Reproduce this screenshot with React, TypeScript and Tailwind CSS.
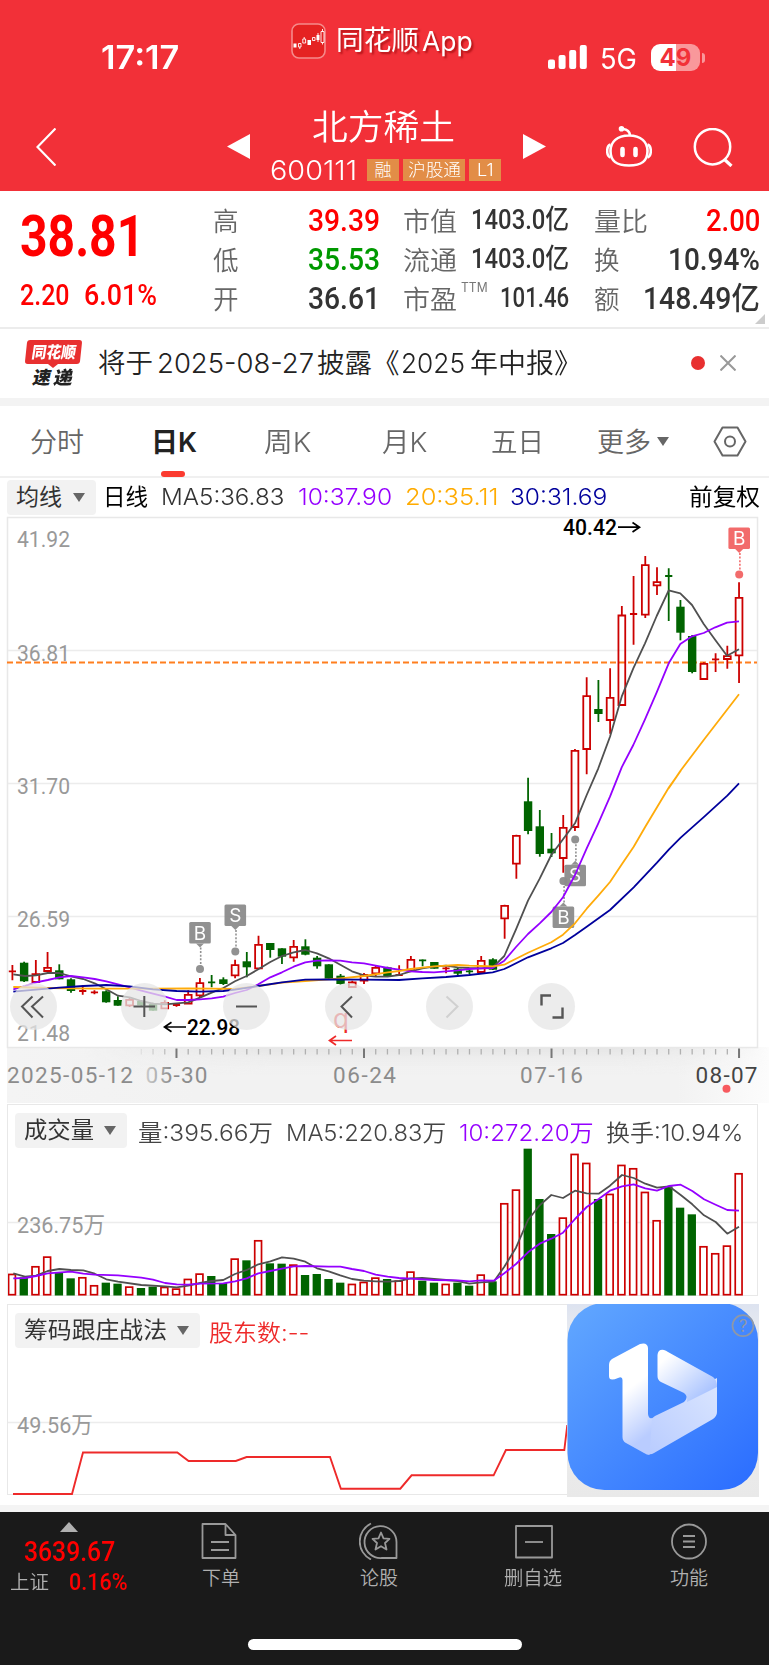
import { useLayoutEffect, useRef, type ReactNode } from "react";

const UI = "font-[Inter,'Noto_Sans_CJK_SC',sans-serif]";
const DIN = "font-[Roboto,'Noto_Sans_CJK_SC',sans-serif]";

/** A single line of text that is condensed or stretched to a known column width. */
function Fit({ w, className = "", children }: { w: number; className?: string; children: ReactNode }) {
  const inner = useRef<HTMLSpanElement>(null);
  useLayoutEffect(() => {
    const el = inner.current;
    if (el) el.style.transform = `scaleX(${w / el.offsetWidth})`;
  }, [w, children]);
  return (
    <span className={`block shrink-0 text-left whitespace-nowrap ${className}`} style={{ width: w }}>
      <span ref={inner} className="inline-block origin-left">{children}</span>
    </span>
  );
}

type Candle = [kind: "r" | "g", high: number, top: number, bottom: number, low: number, volumeTop: number];

const CANDLES: Candle[] = [
  ["r", 965, 971.3, 971.3, 980.3, 521], ["g", 961.7, 962.7, 981.3, 982, 532], ["r", 960, 973.7, 982.3, 983, 498],
  ["r", 952, 967.3, 971.3, 972, 469], ["g", 964.3, 970.3, 979.3, 979.3, 517], ["g", 978.3, 979.3, 991, 992.7, 535],
  ["r", 985, 991, 991, 994.7, 531], ["r", 990.3, 992.3, 992.3, 994.3, 555], ["g", 990.3, 991.3, 1002.3, 1002.7, 548],
  ["g", 996.3, 1000, 1005.7, 1005.7, 551], ["r", 997.7, 999.3, 1005.7, 1007, 559], ["g", 1000, 1001, 1005.3, 1006, 564],
  ["g", 1002.7, 1004, 1010.7, 1010.7, 560], ["r", 1000.3, 1002.3, 1008.7, 1009, 560], ["r", 1003.3, 1005, 1005, 1006.7, 565],
  ["r", 990.3, 994.3, 1004, 1004.3, 536], ["r", 978, 982.7, 995.7, 997.7, 520], ["g", 975, 982.3, 982.3, 987.3, 528],
  ["g", 977.3, 979.3, 984, 985, 549], ["r", 959.7, 964.7, 975.7, 978.3, 475], ["g", 952, 961.3, 967.3, 977.3, 481],
  ["r", 935.7, 944.3, 968.7, 969, 420], ["g", 943, 943, 950, 957.7, 490], ["g", 948.3, 948.3, 956.7, 964, 491],
  ["r", 940, 946.3, 957.7, 961.7, 493], ["g", 939.3, 946.3, 954.7, 955.3, 525], ["g", 956, 957.7, 966.3, 968.7, 522],
  ["g", 964.3, 964.3, 978.7, 978.7, 537], ["g", 974, 975.7, 984, 984.7, 548], ["r", 980.7, 982, 987.3, 988, 551],
  ["r", 973, 974.3, 981, 984, 545], ["r", 966, 967.3, 973.7, 976, 532], ["g", 966.7, 967.3, 976.7, 976.7, 537],
  ["r", 965.3, 975, 975, 976, 541], ["r", 956, 959.3, 970.7, 972, 514], ["g", 959.3, 960.3, 960.3, 966.3, 542],
  ["g", 962, 962, 968.7, 968.7, 548], ["r", 966.7, 968.3, 968.3, 973.3, 551], ["g", 967.3, 968.7, 973.7, 975.3, 548],
  ["g", 969.3, 971.3, 971.3, 974, 557], ["r", 956, 960.3, 972.3, 972.7, 523], ["g", 958.3, 959.3, 969.7, 970, 544],
  ["r", 904.7, 905.3, 918.7, 938.7, 309], ["r", 834.7, 835.3, 864, 878.7, 268], ["g", 777.7, 801.3, 831, 834.3, 146],
  ["g", 810, 826.3, 854, 856.7, 297], ["g", 833, 848.7, 853.3, 857, 402], ["r", 815, 827.3, 858.3, 872.7, 352],
  ["r", 749, 750.3, 827.3, 831, 161], ["r", 677.3, 695.7, 749.3, 774.3, 188], ["g", 680, 709, 714, 722, 297],
  ["r", 668.3, 697.3, 720.3, 733.7, 281], ["r", 606, 615, 705.3, 705.3, 194], ["r", 576, 614, 614, 644.7, 204],
  ["r", 556, 564.7, 615, 618, 275], ["r", 567.3, 581.7, 585.7, 595, 360], ["g", 568.3, 576, 576, 621, 259],
  ["g", 600, 606.7, 632.7, 640.3, 323], ["g", 635, 636, 672, 673.3, 343], ["r", 662.3, 663.3, 679.3, 679.3, 438],
  ["r", 653.3, 659.3, 659.3, 672, 459], ["r", 645.7, 655.7, 659.3, 668.7, 436], ["r", 582.3, 597.3, 655.7, 683, 219],
];

const RED = "#cc0000";
const GREEN = "#006400";
const cx = (i: number) => 12.4 + i * 11.72;

type Segment = [ox: number, oy: number, points: string];

/** Joins segments, stored in thirds of a pixel from their own origin, into one point list. */
const track = (...segments: Segment[]) =>
  segments
    .map(([ox, oy, pts]) =>
      pts.split(" ").map((p) => {
        const [x, y] = p.split(",").map(Number);
        return `${(ox + x / 3).toFixed(1)},${(oy + y / 3).toFixed(1)}`;
      }).join(" "))
    .join(" ");

const MA5 = track(
  [0, 900, "40,223 75,228 108,226 143,219 178,219 213,229 250,237 284,250 319,268 354,287 389,292 424,303 459,311 495,313 530,310 565,307 600,293 635,278 670,264 705,244 740,228 775,208 811,186 846,168 881,157 916,150 951,160 986,175 1021,194 1056,214 1092,226 1127,230"],
  [380, 760, "23,650 57,645 92,634 127,625 162,620 198,617 233,622 268,624 303,625 338,622 373,588 408,508 444,422 479,356 514,285 549,238 585,190 620,105"],
  [480, 510, "355,775 390,680 425,560 460,475 495,400 530,318 566,241 601,250 636,285 671,342 706,390 741,437 777,418"],
);
const MA10 = track(
  [0, 900, "40,268 75,258 108,247 143,240 178,232 213,228 250,232 284,237 319,244 354,253 389,262 424,272 459,281 495,290 530,300 565,300 600,298 635,295 670,290 705,279 740,270 775,253 811,232 846,217 881,200 916,187 951,182 986,181 1021,182 1056,187 1092,190 1127,197"],
  [380, 760, "23,624 57,629 92,634 127,636 162,637 198,634 233,631 268,627 303,625 338,624 373,602 408,561 444,522 479,490 514,456 549,412 585,345 620,265 655,190 690,110"],
  [480, 510, "425,772 460,705 495,628 530,547 566,460 601,402 636,379 671,369 706,352 741,338 777,334"],
);
const MA20 = track(
  [0, 900, "40,261 143,264 213,265 284,266 354,266 459,266 565,265 635,266 705,267 775,258 846,248 916,243 986,238 1021,235 1092,228"],
  [380, 760, "23,637 57,633 92,627 127,623 162,619 198,617 233,615 268,617 303,618 338,619 373,614 408,596 444,578 514,547 549,524 585,490 620,446 655,407 690,366 726,312 761,260 796,200 831,142 867,82 902,32"],
  [480, 510, "566,835 601,783 671,690 777,553"],
);
const MA30 = track(
  [0, 900, "40,275 108,269 178,263 250,258 319,255 389,259 459,268 530,273 600,275 670,273 705,269 775,258 846,247 916,239 986,238 1092,239"],
  [380, 760, "57,660 127,655 198,651 268,645 338,637 373,627 444,592 514,565 549,549 585,525 620,500 690,450 761,382 831,308 867,268 902,233 973,170 1042,107 1077,70"],
);
const VOL5 = track(
  [0, 1100, "40,520 75,530 108,527 143,513 178,507 213,510 250,511 284,521 319,538 354,545 424,555 495,559 530,562 565,557 600,549 635,543 670,540 705,522 740,510 775,493 811,484 846,472 881,476 916,485 951,505 986,514 1021,526 1056,537 1092,542 1127,544"],
  [380, 1100, "23,545 57,543 92,535 127,534 162,537 198,540 233,543 268,551 303,547 341,545 373,500 408,443 444,360 479,316 514,285 549,294 585,272 620,280 656,281 690,257 726,225 761,234 796,251 831,263 867,259 902,285 937,313 972,346 1007,366 1042,401 1077,380"],
);
const VOL10 = track(
  [0, 1100, "40,535 75,534 108,528 143,520 213,515 250,521 284,524 354,526 424,533 459,539 495,549 530,553 565,554 600,551 670,550 705,544 740,535 775,520 811,513 846,506 881,499 916,498 986,500 1021,500 1056,507 1092,513 1127,524"],
  [380, 1100, "23,530 57,534 92,536 162,540 233,541 268,544 303,541 341,542 373,520 408,492 444,457 479,431 514,416 549,398 585,357 620,321 656,297 690,272 726,259 761,253 796,265 831,272 867,258 902,254 937,273 972,298 1007,314 1042,330 1077,332"],
);

function Line({ points, color }: { points: string; color: string }) {
  return <polyline points={points} fill="none" stroke={color} strokeWidth="1.8" strokeLinejoin="round" />;
}

/** Chart label placed by its left edge, vertical middle and width. */
function Label({ x, y, w, size = 22.5, fill = "#999", weight = 400, spaced = false, children }: {
  x: number; y: number; w: number; size?: number; fill?: string; weight?: number; spaced?: boolean; children: string;
}) {
  return (
    <text x={x} y={y - 0.8 + size * 0.357} fontSize={size} fill={fill} fontWeight={weight} textLength={w}
      lengthAdjust={spaced ? "spacing" : "spacingAndGlyphs"} className={DIN}>
      {children}
    </text>
  );
}

function Marker({ x, top, dot, color, letter }: { x: number; top: number; dot: number; color: string; letter: string }) {
  const above = dot > top;
  const edge = above ? top + 21.5 : top;
  const tip = above ? edge + 4 : edge - 4;
  return (
    <g fill={color} opacity="0.95">
      <rect x={x - 10.8} y={top} width="21.6" height="21.6" rx="1.5" />
      <path d={`M${x - 4} ${edge}L${x} ${tip}L${x + 4} ${edge}Z`} />
      <line x1={x + 0.7} x2={x + 0.7} y1={tip} y2={dot} stroke={color} strokeWidth="1.6" strokeDasharray="2 1.6" />
      <circle cx={x} cy={dot} r="4" />
      <text x={x} y={top + 17.6} fontSize="19" fill="#fff" textAnchor="middle" className={UI}>{letter}</text>
    </g>
  );
}

function Caret({ className }: { className: string }) {
  return <svg viewBox="0 0 12 9" className={className}><path d="M0 0H12L6 9Z" fill="#666" /></svg>;
}

function StatusBar() {
  return (
    <div className="flex h-20 items-start text-white">
      <Fit w={78} className="ml-[101px] mt-[40px] h-[34px] text-[33px] leading-[34px] font-semibold">17:17</Fit>
      <svg viewBox="0 0 35 36" className="ml-[112px] mt-[23px] h-9 w-[35px]">
        <rect x="1" y="1" width="33" height="34" rx="7" fill="#e52222" stroke="#f58a8a" strokeWidth="1.6" />
        <path d="M2.500 20.500h3v4h-3zM16.500 17h3.500v5h-3.500zM25.500 12h3v5h-3z" fill="#fff" />
        <path d="M7.500 20.500h2.500v3.500h-2.500zM8.800 24v2M11.800 16h2.800v4h-2.800zM13.200 14v2M21.500 14.500h2.500v3h-2.500zM27 10v9M30 8.500h3v11h-3zM31.500 6v2.500M31.500 19.500v2" fill="none" stroke="#fff" strokeWidth=".9" />
      </svg>
      <Fit w={83} className="ml-[10px] mt-[25px] h-8 text-[27px] leading-8 font-normal [text-shadow:2px_2px_2px_#8009]">同花顺</Fit>
      <Fit w={51} className="ml-[3px] mt-[26px] h-8 text-[27px] leading-8 font-normal [text-shadow:2px_2px_2px_#8009]">App</Fit>
      <svg viewBox="0 0 39 24" className="ml-[75px] mt-[45px] h-6 w-[39px]" fill="#fff">
        <rect x="0" y="14.500" width="7" height="9.500" rx="2" /><rect x="10.600" y="10" width="7" height="14" rx="2" />
        <rect x="21.200" y="5" width="7" height="19" rx="2" /><rect x="31.800" y="0" width="7" height="24" rx="2" />
      </svg>
      <Fit w={37} className="ml-[13px] mt-[42px] h-[34px] text-[28px] leading-[34px]">5G</Fit>
      <div className="ml-[14px] mt-[44px] flex h-[27px] w-[49px] items-center justify-center rounded-[9px] bg-[linear-gradient(90deg,#fff_50%,#f9989b_50%)] text-[24px] leading-[27px] font-bold text-[#f23038]">49</div>
      <div className="ml-0.5 mt-[53px] h-2.5 w-[3px] rounded-r-full bg-[#f9989b]" />
    </div>
  );
}

function Tag({ className, w, children }: { className: string; w: number; children: string }) {
  return (
    <span className={`flex h-[22px] items-center justify-center bg-[#e28d47] ${className}`}>
      <Fit w={w} className="text-[17px] leading-[22px] font-light">{children}</Fit>
    </span>
  );
}

function TitleBar() {
  return (
    <div className="flex h-[111px] items-start text-white">
      <svg viewBox="0 0 20 38" className="ml-9 mt-12 h-[38px] w-5" fill="none" stroke="#fff" strokeWidth="2.200"><path d="M19.500 .5L1.500 19L19.500 37.500" /></svg>
      <svg viewBox="0 0 23 25" className="ml-[171px] mt-[54px] h-[25px] w-[23px]"><path d="M23 0V25L0 12.500Z" fill="#fff" /></svg>
      <div className="ml-[21px] mt-7 w-[230px]">
        <Fit w={143} className="ml-[41px] h-[38px] text-[35px] leading-[38px] font-[350]">北方稀土</Fit>
        <div className="mt-[13px] flex h-[22px] items-center">
          <Fit w={87} className="-ml-px text-[27.500px] leading-6 font-[350]">600111</Fit>
          <Tag className="ml-[10px] w-8" w={17}>融</Tag>
          <Tag className="ml-[4px] w-[62px]" w={53}>沪股通</Tag>
          <Tag className="ml-[4px] w-8" w={17}>L1</Tag>
        </div>
      </div>
      <svg viewBox="0 0 23 25" className="ml-[22px] mt-[54px] h-[25px] w-[23px]"><path d="M0 0V25L23 12.500Z" fill="#fff" /></svg>
      <svg viewBox="0 0 46 42" className="ml-[60px] mt-[46px] h-[42px] w-[46px]" fill="none" stroke="#fff" strokeWidth="2.600">
        <path d="M23 9.500C11 9.500 4.500 16 4.500 25C4.500 35 10 39.500 23 39.500C36 39.500 41.500 35 41.500 25C41.500 16 35 9.500 23 9.500ZM24 9C23.500 5 21 3.500 17 3" />
        <path d="M4.500 18.500C1.500 19.500 1.200 21.500 1.200 25S1.500 30.500 4.500 31.500M41.500 18.500C44.500 19.500 44.800 21.500 44.800 25S44.500 30.500 41.500 31.500" />
        <path d="M16.500 23v6M29.500 23v6" strokeWidth="4.600" strokeLinecap="round" /><circle cx="15.500" cy="2.800" r="1.500" fill="#fff" />
      </svg>
      <svg viewBox="0 0 40 39" className="ml-[41px] mt-[48px] h-[39px] w-10" fill="none" stroke="#fff" strokeWidth="2.500"><circle cx="19.500" cy="18.700" r="17.700" /><path d="M31.500 31.500L38.500 38" strokeWidth="3.200" /></svg>
    </div>
  );
}

function QuoteRow({ label, w, children }: { label: string; w: number; children: ReactNode }) {
  return (
    <div className="flex h-[39px] items-center justify-between">
      <Fit w={w} className="mt-0.5 text-[26.500px] leading-[39px] font-[350] text-[#666]">{label}</Fit>
      {children}
    </div>
  );
}

function Quote() {
  const num = `${DIN} leading-[39px] font-medium`;
  return (
    <section className="flex h-[138px] border-b-2 border-[#ececec] pt-[10px]">
      <div className="ml-[20px] w-[193px] text-[#ff0000]">
        <Fit w={124} className={`${DIN} mt-2 h-[56px] text-[57px] leading-[56px] font-bold`}>38.81</Fit>
        <div className={`${DIN} mt-[15px] flex h-[30px] text-[29px] leading-[30px] font-medium`}>
          <Fit w={50}>2.20</Fit>
          <Fit w={73} className="ml-[14px]">6.01%</Fit>
        </div>
      </div>
      <div className="w-[167px]">
        <QuoteRow label="高" w={26}><Fit w={72} className={`${num} text-[31px] text-[#ff0000]`}>39.39</Fit></QuoteRow>
        <QuoteRow label="低" w={26}><Fit w={72} className={`${num} text-[31px] text-[#009900]`}>35.53</Fit></QuoteRow>
        <QuoteRow label="开" w={26}><Fit w={72} className={`${num} text-[31px] text-[#333]`}>36.61</Fit></QuoteRow>
      </div>
      <div className="ml-[23px] w-[166px] text-[#333]">
        <QuoteRow label="市值" w={54}><Fit w={98} className={`${num} text-[27px]`}>1403.0亿</Fit></QuoteRow>
        <QuoteRow label="流通" w={54}><Fit w={98} className={`${num} text-[27px]`}>1403.0亿</Fit></QuoteRow>
        <QuoteRow label="市盈" w={54}>
          <Fit w={27} className="mb-[22px] -mr-0.5 -ml-2.5 text-[13px] leading-none text-[#777]">TTM</Fit>
          <Fit w={69} className={`${num} text-[27px]`}>101.46</Fit>
        </QuoteRow>
      </div>
      <div className="ml-[25px] w-[166px] text-[#333]">
        <QuoteRow label="量比" w={54}><Fit w={54} className={`${num} text-[31px] text-[#ff0000]`}>2.00</Fit></QuoteRow>
        <QuoteRow label="换" w={26}><Fit w={92} className={`${num} text-[31px]`}>10.94%</Fit></QuoteRow>
        <QuoteRow label="额" w={26}><Fit w={117} className={`${num} text-[31px]`}>148.49亿</Fit></QuoteRow>
      </div>
      <svg viewBox="0 0 10 10" className="-ml-[5px] mt-[113px] size-2.5"><path d="M10 0V10H0Z" fill="#ccc" /></svg>
    </section>
  );
}

function News() {
  return (
    <section className="flex h-[69px] items-center pb-px text-[27.500px] leading-[34px] text-[#222]">
      <div className="ml-[24px] flex w-[58px] flex-col items-center pt-0.5">
        <div className="flex h-6 w-[55px] -skew-x-6 items-center justify-center rounded-[3px] bg-[#e83030] text-white">
          <Fit w={44} className="-skew-x-3 text-[16px] leading-6 font-black">同花顺</Fit>
        </div>
        <svg viewBox="0 0 10 4" className="h-1 w-2.5"><path d="M0 0H10L5 4Z" fill="#e83030" /></svg>
        <div className="flex h-[20px] -skew-x-12 gap-[3px]">
          <Fit w={18} className="text-[18px] leading-5 font-black">速</Fit>
          <Fit w={19} className="text-[18px] leading-5 font-black">递</Fit>
        </div>
      </div>
      <Fit w={55} className="ml-[16px] font-[350]">将于</Fit>
      <Fit w={157} className="ml-[4px] font-[350]">2025-08-27</Fit>
      <Fit w={83} className="ml-[3px] font-[350]">披露《</Fit>
      <Fit w={64} className="ml-px font-[350]">2025</Fit>
      <Fit w={112} className="ml-[5px] font-[350]">年中报》</Fit>
      <span className="ml-[109px] size-3.5 rounded-full bg-[#e83030]" />
      <svg viewBox="0 0 16 16" className="ml-[15px] size-4" stroke="#999" strokeWidth="2"><path d="M.5 .5L15.500 15.500M15.500 .5L.5 15.500" /></svg>
    </section>
  );
}

function Tabs() {
  const tab = "mt-[3px] text-[27px] leading-[36px]";
  return (
    <nav className="relative flex h-[72px] items-center border-b-2 border-[#f0f0f0] font-[350] text-[#666]">
      <Fit w={54} className={`${tab} ml-[30px]`}>分时</Fit>
      <Fit w={46} className={`${tab} ml-[67px] font-semibold text-[#222]`}>日K</Fit>
      <Fit w={47} className={`${tab} ml-[67px]`}>周K</Fit>
      <Fit w={45} className={`${tab} ml-[71px]`}>月K</Fit>
      <Fit w={53} className={`${tab} ml-[64px]`}>五日</Fit>
      <Fit w={54} className={`${tab} ml-[53px]`}>更多</Fit>
      <Caret className="ml-[6px] h-[9px] w-3" />
      <svg viewBox="0 0 34 31" className="ml-[44px] mt-px h-[31px] w-[34px]" fill="none" stroke="#666" strokeWidth="2"><path d="M9.500 1.500H24.500L32.500 15.500L24.500 29.500H9.500L1.500 15.500Z" strokeLinejoin="round" /><circle cx="17" cy="15.500" r="5" /></svg>
      <span className="absolute -bottom-px left-[161px] h-1.5 w-6 rounded-[3px] bg-[#fb3b30]" />
    </nav>
  );
}

function Pick({ className, w, children }: { className: string; w: number; children: string }) {
  return (
    <button className={`flex h-[35px] shrink-0 items-center justify-between rounded-[4px] bg-[#f2f2f2] pl-[9px] pr-[11px] text-[23px] leading-[35px] text-[#333] ${className}`}>
      <Fit w={w}>{children}</Fit>
      <Caret className="h-[9px] w-3" />
    </button>
  );
}

function Averages() {
  return (
    <div className="flex h-[39px] items-center text-[23px] leading-[35px]">
      <Pick className="ml-[7px] w-[89px]" w={46}>均线</Pick>
      <Fit w={45} className="ml-[7px] text-black">日线</Fit>
      <Fit w={123} className="ml-[13px] font-light text-[#333]">MA5:36.83</Fit>
      <Fit w={94} className="ml-[14px] font-[350] text-[#9500ff]">10:37.90</Fit>
      <Fit w={93} className="ml-[13px] font-[350] text-[#ffab00]">20:35.11</Fit>
      <Fit w={97} className="ml-[12px] font-[350] text-[#00009c]">30:31.69</Fit>
      <Fit w={71} className="ml-[82px] text-black">前复权</Fit>
    </div>
  );
}

function Round({ children, stroke = "#555" }: { children: ReactNode; stroke?: string }) {
  return (
    <button className="size-[47px] rounded-full bg-[#e6e6e6]/75">
      <svg viewBox="0 0 47 47" className="size-[47px]" fill="none" stroke={stroke} strokeWidth="2">{children}</svg>
    </button>
  );
}

function PriceChart() {
  return (
    <section className="relative h-[587px]">
      <svg viewBox="0 516 769 587" className="block h-[587px] w-full">
        <defs>
          <linearGradient id="strip" x1="0" x2="1" y1="0" y2="0">
            <stop offset="0" stopColor="#f4f4f4" /><stop offset=".25" stopColor="#f2f2f2" />
            <stop offset=".88" stopColor="#f2f2f2" /><stop offset="1" stopColor="#fcfcfc" />
          </linearGradient>
          <linearGradient id="shade" x1="0" x2="0" y1="0" y2="1">
            <stop offset="0" stopColor="#e4e4e4" /><stop offset="1" stopColor="#f2f2f2" stopOpacity="0" />
          </linearGradient>
          <linearGradient id="sides" x1="0" x2="1" y1="0" y2="0">
            <stop offset=".1" stopColor="#000" /><stop offset=".35" stopColor="#fff" /><stop offset=".8" stopColor="#fff" /><stop offset="1" stopColor="#000" />
          </linearGradient>
          <mask id="fade"><rect x="7" y="1047" width="762" height="56" fill="url(#sides)" /></mask>
        </defs>
        <rect x="7" y="1047" width="762" height="56" fill="url(#strip)" />
        <rect x="7" y="1047" width="762" height="28" fill="url(#shade)" mask="url(#fade)" />
        <rect x="7.500" y="517.500" width="750" height="530" fill="#fff" stroke="#e8e8e8" strokeWidth="1.500" />
        <path d="M8 650.500H757M8 783.500H757M8 916.500H757" stroke="#ececec" strokeWidth="1.300" />

        <Label x={17} y={539.5} w={53}>41.92</Label>
        <Label x={17} y={653.5} w={53}>36.81</Label>
        <Label x={17} y={787} w={53}>31.70</Label>
        <Label x={17} y={920} w={53}>26.59</Label>
        <Label x={17} y={1033.500} w={53}>21.48</Label>
        <path d="M7 662.500H757" stroke="#ff7f1e" strokeWidth="1.800" strokeDasharray="6 3" />

        {CANDLES.map(([kind, high, top, bottom, low], i) => {
          const x = cx(i);
          const color = kind === "r" ? RED : GREEN;
          return (
            <g key={i} stroke={color} strokeWidth="1.800" fill="none">
              {top === bottom ? (
                <path d={`M${x} ${high}V${low}M${x - 3.600} ${top}H${x + 3.600}`} />
              ) : kind === "r" ? (
                <path d={`M${x} ${high}V${top}M${x} ${bottom}V${low}M${x - 3.400} ${top + .5}H${x + 3.400}V${bottom - .3}H${x - 3.400}Z`} />
              ) : (
                <><path d={`M${x} ${high}V${low}`} /><rect x={x - 4.200} y={top} width="8.400" height={bottom - top} fill={color} stroke="none" /></>
              )}
            </g>
          );
        })}

        <Marker x={200} top={922} dot={969} color="#8c8c8c" letter="B" />
        <Marker x={235.3} top={904.5} dot={951.5} color="#8c8c8c" letter="S" />
        <Marker x={575.2} top={864.7} dot={839.5} color="#8c8c8c" letter="S" />
        <Marker x={563.400} top={906.5} dot={881} color="#8c8c8c" letter="B" />
        <Marker x={739.200} top={527.5} dot={574.5} color="#f26464" letter="B" />

        <Line points={MA5} color="#505050" />
        <Line points={MA10} color="#9500ff" />
        <Line points={MA20} color="#ffab0a" />
        <Line points={MA30} color="#00009c" />

        <Label x={563} y={528} w={54} fill="#000" weight={500}>40.42</Label>
        <path d="M618 527.200H639M632.500 522.500L639.500 527.200L632.500 532" fill="none" stroke="#000" strokeWidth="1.700" />
        <Label x={187} y={1028} w={53} fill="#000" weight={500}>22.98</Label>
        <path d="M186 1027H165M171.500 1022.300L164.500 1027L171.500 1031.700" fill="none" stroke="#000" strokeWidth="1.700" />
        <text x="333" y="1028" fontSize="26" fill="#ee2a2a" className={UI}>q</text>
        <path d="M352 1040.500H330M336 1036L329.500 1040.500L336 1045" fill="none" stroke="#ee2a2a" strokeWidth="1.700" />

        {CANDLES.map((_, i) =>
          i > 10 && (
            <path key={i} d={(i - 14) % 16 === 0 ? `M${cx(i)} 1048.500V1058` : `M${cx(i)} 1049V1054.500`}
              stroke={(i - 14) % 16 === 0 ? "#777" : "#b0b0b0"} strokeWidth={(i - 14) % 16 === 0 ? 2 : 1.300} opacity={i < 14 ? (i - 10) / 4 : 1} />
          ))}
        <linearGradient id="emerge" gradientUnits="userSpaceOnUse" x1="145" x2="172" y1="0" y2="0">
          <stop offset="0" stopColor="#ccc" /><stop offset="1" stopColor="#8c8c8c" />
        </linearGradient>
        <Label spaced x={7} y={1075.500} w={126} fill="#8c8c8c">2025-05-12</Label>
        <Label spaced x={145.500} y={1075.500} w={62} fill="url(#emerge)">05-30</Label>
        <Label spaced x={333} y={1075.500} w={63} fill="#8c8c8c">06-24</Label>
        <Label spaced x={520} y={1075.500} w={63} fill="#8c8c8c">07-16</Label>
        <Label spaced x={695.500} y={1075.500} w={62} fill="#444">08-07</Label>
        <circle cx="726.500" cy="1088.700" r="4" fill="#f75a5f" />
      </svg>
      <div className="absolute top-[467px] left-2.5 flex gap-[54.700px]">
        <div className="mr-[9.500px] flex"><Round><path d="M22.500 13.500L12 23.500L22.500 34.500M33 13.500L22 23.500L33 34.500" /></Round></div>
        <Round><path d="M12.500 23.500H34M23.300 13V34" /></Round>
        <Round><path d="M13 23.500H34" /></Round>
        <Round><path d="M27 13.500L16.500 23.500L27 34.500" /></Round>
        <Round stroke="#d0d0d0"><path d="M20.500 13.500L31.500 23.500L20.500 34.500" /></Round>
        <Round><path d="M13.500 22.500V12.500H23M24.500 34.500H34.500V24.500" strokeWidth="2.400" /></Round>
      </div>
    </section>
  );
}

function Volume() {
  return (
    <section className="ml-[7px] mt-px h-[192px] w-[751px] border border-[#e8e8e8]">
      <div className="flex h-[43px] items-end text-[23px] leading-[35px] text-[#444]">
        <Pick className="ml-[7px] w-[112px]" w={70}>成交量</Pick>
        <div className="flex h-[30px] items-center font-[350]">
          <Fit w={135} className="ml-[11px]">量:395.66万</Fit>
          <Fit w={160} className="ml-[13px]">MA5:220.83万</Fit>
          <Fit w={135} className="ml-[13px] text-[#9500ff]">10:272.20万</Fit>
          <Fit w={137} className="ml-[12px]">换手:10.94%</Fit>
        </div>
      </div>
      <svg viewBox="8 1148 749 147.500" className="block h-[147.500px] w-[749px]">
        <path d="M8 1222.500H757" stroke="#ececec" strokeWidth="1.300" />
        <Label x={17} y={1225.500} w={88}>236.75万</Label>
        {CANDLES.map(([kind, , , , , v], i) => {
          const top = 1100 + v / 3;
          return kind === "r"
            ? <rect key={i} x={cx(i) - 3.800} y={top + .8} width="6.800" height={1294.700 - top - .8} fill="#fff" stroke={RED} strokeWidth="1.700" />
            : <rect key={i} x={cx(i) - 4.500} y={top} width="8.300" height={1295.500 - top} fill={GREEN} />;
        })}
        <Line points={VOL5} color="#505050" />
        <Line points={VOL10} color="#9500ff" />
      </svg>
    </section>
  );
}

function AppBadge() {
  return (
    <div className="absolute -top-px right-[-2px] h-[193px] w-[192px] bg-[linear-gradient(180deg,#dde3f0,#f0f0f0_25%,#e9e9e9)]">
      <svg viewBox="567 1304 192 193" className="h-[193px] w-[192px]">
        <defs>
          <linearGradient id="tile" x1="0" y1="0" x2="1" y2="1"><stop offset="0" stopColor="#62a8ff" /><stop offset="1" stopColor="#2a6cff" /></linearGradient>
          <linearGradient id="stem" x1="0" y1="0" x2=".3" y2="1"><stop offset=".5" stopColor="#fff" /><stop offset="1" stopColor="#b9ccff" /></linearGradient>
          <linearGradient id="fold" x1="0" y1="0" x2="1" y2="1"><stop offset=".15" stopColor="#fff" /><stop offset=".85" stopColor="#a9c3ff" /></linearGradient>
          <linearGradient id="sweep" x1="0" y1="1" x2="1" y2="0"><stop offset="0" stopColor="#b9ccff" /><stop offset="1" stopColor="#dbe6ff" /></linearGradient>
        </defs>
        <rect x="567.500" y="1303" width="190.500" height="187" rx="37" fill="url(#tile)" />
        <path d="M648 1419Q651 1420 655 1416L684 1402Q687 1399 687 1394L717 1378V1412Q717 1416 713 1419L654 1453Q651 1455 648 1454Z" fill="url(#sweep)" />
        <path d="M657.500 1355Q658 1349 664 1350Q666 1350.500 668 1352L713 1377Q717 1380 717 1387L687 1402Q688 1396 684 1393L661 1382Q657.500 1380 657.500 1376Z" fill="url(#fold)" />
        <path d="M640 1344Q647.500 1342 648 1348V1414Q648.500 1418.500 652 1418.500L649.500 1455Q647 1455 644 1453L626 1443Q622.500 1441 622.500 1437V1380Q622.500 1376 618 1378Q609 1382 609 1376V1365Q609 1361 612 1359Z" fill="url(#stem)" />
        <circle cx="743" cy="1325.700" r="10.500" fill="none" stroke="#8e98a8" strokeWidth="1.700" />
        <text x="743" y="1331.700" fontSize="17" fill="#8e98a8" textAnchor="middle" className={UI}>?</text>
      </svg>
    </div>
  );
}

function Holders() {
  return (
    <section className="relative ml-[7px] mt-[8px] h-[191px] w-[751px] border border-[#e8e8e8]">
      <div className="flex h-[43px] items-end text-[23px] leading-[35px]">
        <Pick className="ml-[7px] w-[185px]" w={143}>筹码跟庄战法</Pick>
        <div className="flex h-[30px] items-center"><Fit w={100} className="ml-[9px] font-[350] text-[#ee2a2a]">股东数:--</Fit></div>
      </div>
      <svg viewBox="8 1348 749 146" className="block h-[146px] w-[749px] overflow-visible">
        <path d="M8 1422.500H757" stroke="#ececec" strokeWidth="1.300" />
        <Label x={17} y={1425.500} w={76}>49.56万</Label>
        <polyline points="13,1494 72,1494 83,1452.500 177.300,1452.500 188.600,1461 235.800,1461 246.600,1457 330,1457 340.900,1488.700 400.300,1488.700 411.600,1475.300 493.600,1475.300 505.900,1450 564.300,1450 567.300,1425" fill="none" stroke="#ee2a2a" strokeWidth="1.900" />
      </svg>
      <AppBadge />
    </section>
  );
}

function Action({ className, label, w, children }: { className: string; label: string; w: number; children: ReactNode }) {
  return (
    <button className={`flex w-[60px] shrink-0 flex-col items-center ${className}`}>
      <svg viewBox="0 0 40 38" className="h-[38px] w-10" fill="none" stroke="#999" strokeWidth="1.800" strokeLinejoin="round">{children}</svg>
      <Fit w={w} className="mt-[7px] text-[19px] leading-6 font-[350] text-[#b0b0b0]">{label}</Fit>
    </button>
  );
}

function Footer() {
  return (
    <footer className="h-[153px] bg-[#1a1a1a] pt-[10px]">
      <div className="flex h-[117px] items-start">
        <div className="w-[134px] text-[#ff0000]">
          <svg viewBox="0 0 18 10" className="ml-[60px] h-2.5 w-[18px]"><path d="M0 10L9 0L18 10Z" fill="#b0b0b0" /></svg>
          <Fit w={91} className={`${DIN} ml-6 mt-[5px] h-[30px] text-[28px] leading-[30px] font-medium`}>3639.67</Fit>
          <div className="mt-[1px] flex h-[28px] items-center">
            <Fit w={39} className="ml-2.5 mt-0.5 text-[19px] leading-7 font-[350] text-[#b0b0b0]">上证</Fit>
            <Fit w={59} className={`${DIN} ml-5 mt-px text-[23px] leading-7 font-medium`}>0.16%</Fit>
          </div>
        </div>
        <Action className="ml-[57px]" label="下单" w={38}>
          <path d="M2 2H25L35 13V36H2ZM25 2V13H35" transform="translate(-.5 0)" /><path d="M10 20H28M10 28H28" />
        </Action>
        <Action className="ml-[98px]" label="论股" w={38}>
          <path d="M37 36H22.500A16 16 0 1 1 37 20Z" transform="translate(.5 0)" /><path d="M12 1.500A20 20 0 0 0 12 37.500" />
          <path d="M22 10.500L24.500 16.300L30.500 16.800L26 21L27.500 27.500L22 24.200L16.500 27.500L18 21L13.500 16.800L19.500 16.300Z" />
        </Action>
        <Action className="ml-[94px]" label="删自选" w={58}>
          <rect x="3" y="4" width="36" height="31.500" /><path d="M12 20H30" />
        </Action>
        <Action className="ml-[96px]" label="功能" w={38}>
          <circle cx="20" cy="19.500" r="17" /><path d="M14 14H26M14 19.500H26M14 25H26" />
        </Action>
      </div>
      <div className="mx-auto h-[11px] w-[274px] rounded-full bg-white" />
    </footer>
  );
}

export default function App() {
  return (
    <main className={`${UI} h-[1665px] w-[769px] overflow-hidden bg-white`}>
      <header className="h-[191px] bg-[#f23038]"><StatusBar /><TitleBar /></header>
      <Quote />
      <News />
      <div className="h-2 bg-[#f3f3f3]" />
      <Tabs />
      <Averages />
      <div className="-mt-px"><PriceChart /></div>
      <Volume />
      <Holders />
      <div className="mt-[10px] h-[7px] bg-[#f4f4f4]" />
      <Footer />
    </main>
  );
}
